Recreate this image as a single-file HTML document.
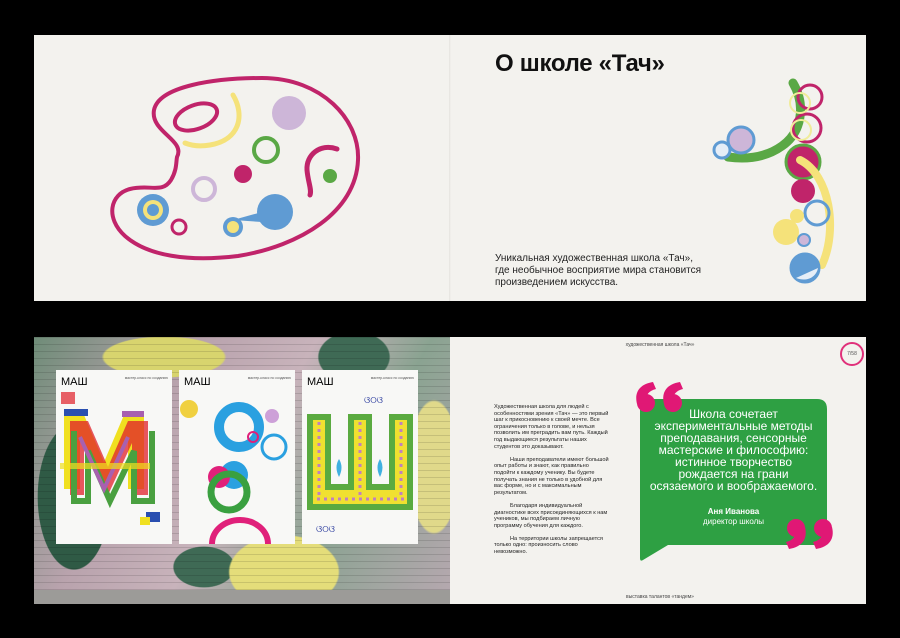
<!DOCTYPE html>
<html><head><meta charset="utf-8"><style>
html,body{margin:0;padding:0;background:#000;width:900px;height:638px;overflow:hidden}
*{box-sizing:border-box}
.f{font-family:"Liberation Sans",sans-serif}
.pg{position:absolute;background:#f3f2ee}
</style></head><body class="f">
<div class="pg" style="left:34px;top:35px;width:832px;height:266px"></div>
<div style="position:absolute;left:449px;top:35px;width:2px;height:266px;background:linear-gradient(90deg,#e4e3de,#f3f2ee)"></div>
<svg style="position:absolute;left:0;top:0" width="900" height="638">
<g fill="none" stroke-linecap="round">
<path d="M177,157 C186,140 150,132 154,110 C159,86 215,78 262,78 C322,78 360,120 358,160 C356,212 300,246 238,256 C188,262 148,256 125,236 C105,218 110,194 130,189 C150,184 162,194 171,180 C177,170 176,162 177,157Z" stroke="#c0246a" stroke-width="4"/>
<ellipse cx="196" cy="117" rx="22" ry="12" transform="rotate(-20 196 117)" stroke="#c0246a" stroke-width="4"/>
<path d="M233,95 C245,115 240,140 210,145 C198,147 190,145 185,143" stroke="#f5e27a" stroke-width="5"/>
<circle cx="266" cy="150" r="12" stroke="#5aa845" stroke-width="4"/>
<path d="M337,149 C320,143 306,155 307,170 C308,182 312,190 310,195" stroke="#c0246a" stroke-width="5"/>
<circle cx="204" cy="189" r="11" stroke="#cdb6d8" stroke-width="4"/>
<circle cx="179" cy="227" r="7" stroke="#c0246a" stroke-width="3"/>
</g>
<circle cx="289" cy="113" r="17" fill="#cdb6d8"/>
<circle cx="330" cy="176" r="7" fill="#5aa845"/>
<circle cx="243" cy="174" r="9" fill="#c0246a"/>
<circle cx="153" cy="210" r="16" fill="#5f9bd3"/><circle cx="153" cy="210" r="10" fill="#f5e27a"/><circle cx="153" cy="210" r="6" fill="#5f9bd3"/>
<path d="M233,220 L262,212 L262,222 Z" fill="#5f9bd3"/>
<circle cx="275" cy="212" r="18" fill="#5f9bd3"/>
<circle cx="233" cy="227" r="10" fill="#5f9bd3"/><circle cx="233" cy="227" r="6" fill="#f5e27a"/>
<g fill="none" stroke-linecap="round">
<path d="M793,83 C806,105 802,132 782,146 C768,156 750,160 728,157" stroke="#5aa845" stroke-width="9"/>
<circle cx="810" cy="97" r="12" stroke="#c0246a" stroke-width="3"/>
<circle cx="807" cy="128" r="14" stroke="#c0246a" stroke-width="3"/>
<circle cx="800" cy="103" r="10" stroke="#f0ec9a" stroke-width="2"/>
<circle cx="801" cy="130" r="10" stroke="#f0ec9a" stroke-width="2"/>
</g>
<circle cx="741" cy="140" r="13" fill="#cdb6d8" stroke="#5f9bd3" stroke-width="3"/>
<circle cx="722" cy="150" r="8" fill="#e6eef7" stroke="#5f9bd3" stroke-width="3"/>
<circle cx="803" cy="162" r="17" fill="#c0246a" stroke="#5aa845" stroke-width="3"/>
<circle cx="803" cy="191" r="12" fill="#c0246a"/>
<path d="M800,160 C830,175 838,230 822,265" fill="none" stroke="#f5e27a" stroke-width="8" stroke-linecap="round"/>
<circle cx="817" cy="213" r="12" fill="none" stroke="#5f9bd3" stroke-width="3"/>
<circle cx="797" cy="216" r="7" fill="#f5e27a"/>
<circle cx="786" cy="232" r="13" fill="#f5e27a"/>
<circle cx="804" cy="240" r="6" fill="#cdb6d8" stroke="#5f9bd3" stroke-width="2"/>
<circle cx="805" cy="268" r="14" fill="#5f9bd3" stroke="#5f9bd3" stroke-width="3"/>
<path d="M796,278 C806,282 816,278 818,268" fill="#e6eef7"/>
</svg>
<div style="position:absolute;left:495px;top:50px;font-size:24px;font-weight:bold;color:#111;letter-spacing:-0.3px">О школе «Тач»</div>
<div style="position:absolute;left:495px;top:253px;font-size:10px;line-height:12px;color:#222">Уникальная художественная школа «Тач»,<br>где необычное восприятие мира становится<br>произведением искусства.</div>

<div class="pg" style="left:450px;top:337px;width:416px;height:267px"></div>
<div style="position:absolute;left:34px;top:337px;width:416px;height:267px;overflow:hidden;background:
radial-gradient(ellipse 60px 120px at 40px 160px,#2f5a45 0,#2f5a45 60%,transparent 61%),
radial-gradient(ellipse 90px 60px at 250px 235px,#e4dd7a 0,#e4dd7a 60%,transparent 62%),
radial-gradient(ellipse 50px 130px at 400px 130px,#e0d98a 0,#e0d98a 50%,transparent 52%),
radial-gradient(ellipse 120px 40px at 130px 20px,#d8d46e 0,#d8d46e 50%,transparent 52%),
radial-gradient(ellipse 70px 50px at 320px 20px,#3f6a55 0,#3f6a55 50%,transparent 52%),
radial-gradient(ellipse 60px 40px at 170px 230px,#3f6a55 0,#3f6a55 50%,transparent 52%),
linear-gradient(120deg,#6f8c78 0%,#b9a3ad 30%,#c8b3bb 50%,#8aa391 70%,#b7a8b0 100%)">
<div style="position:absolute;left:0;top:0;width:100%;height:100%;background:repeating-linear-gradient(0deg,rgba(0,0,0,.12) 0 1px,transparent 1px 7px)"></div>
<div style="position:absolute;left:0;top:253px;width:100%;height:14px;background:#9c9b98"></div>
<svg style="position:absolute;left:0;top:0" width="416" height="267">
<g font-family="Liberation Sans,sans-serif">
<rect x="22" y="33" width="116" height="174" fill="#f8f8f6"/>
<rect x="145" y="33" width="116" height="174" fill="#f8f8f6"/>
<rect x="268" y="33" width="116" height="174" fill="#f8f8f6"/>
<text x="27" y="48" font-size="11">МАШ</text><text x="150" y="48" font-size="11">МАШ</text><text x="273" y="48" font-size="11">МАШ</text>
<text x="134" y="42" font-size="3.5" text-anchor="end" fill="#555">мастер-класс по созданию</text>
<text x="257" y="42" font-size="3.5" text-anchor="end" fill="#555">мастер-класс по созданию</text>
<text x="380" y="42" font-size="3.5" text-anchor="end" fill="#555">мастер-класс по созданию</text>
<!-- M -->
<path d="M30,78 L30,152 L46,152 L46,100 L70,152 L94,100 L94,152 L110,152 L110,78 L90,78 L70,125 L50,78Z" fill="#f0e020"/>
<path d="M36,84 L36,158 L50,158 L50,106 L74,158 L98,106 L98,158 L114,158 L114,84 L94,84 L74,130 L54,84Z" fill="#e0202a" opacity=".75"/>
<path d="M40,94 L40,164 L54,164 L54,114 L76,164 L100,114 L100,164 L118,164 L118,94" fill="none" stroke="#4aa040" stroke-width="6"/>
<path d="M46,100 L70,152 L94,100" fill="none" stroke="#a860b0" stroke-width="4"/>
<rect x="30" y="72" width="24" height="7" fill="#2a4fb0"/><rect x="88" y="74" width="22" height="6" fill="#a860b0"/>
<rect x="26" y="126" width="90" height="6" fill="#f0e020" opacity=".7"/>
<rect x="27" y="55" width="14" height="12" fill="#e0202a" opacity=".7"/><rect x="112" y="175" width="14" height="10" fill="#2a4fb0"/><rect x="106" y="180" width="10" height="8" fill="#f0e020"/>
<!-- 2nd -->
<circle cx="155" cy="72" r="9" fill="#f0d040"/><circle cx="205" cy="90" r="20" fill="none" stroke="#2aa0e0" stroke-width="10"/>
<circle cx="200" cy="138" r="14" fill="#2aa0e0"/><circle cx="185" cy="140" r="11" fill="#e0207a"/>
<circle cx="195" cy="155" r="18" fill="none" stroke="#3aa040" stroke-width="7"/><circle cx="219" cy="100" r="5" fill="none" stroke="#e0207a" stroke-width="2"/>
<circle cx="240" cy="110" r="12" fill="none" stroke="#2aa0e0" stroke-width="3"/><circle cx="238" cy="79" r="7" fill="#cda0d8"/>
<path d="M178,207 A28,24 0 0 1 234,207" fill="none" stroke="#e0207a" stroke-width="6"/>
<!-- Ш -->
<path d="M276,80 L276,170 L376,170 L376,80 L358,80 L358,150 L335,150 L335,80 L317,80 L317,150 L294,150 L294,80Z" fill="#f0e030" stroke="#5aaa40" stroke-width="6"/>
<path d="M285,85 V160 M326,85 V160 M367,85 V160 M283,162 H370" stroke="#c080c0" stroke-width="3" stroke-dasharray="3 4"/>
<path d="M305,140 q-5,-10 0,-18 q5,8 0,18 M346,140 q-5,-10 0,-18 q5,8 0,18" fill="#40b0e0"/>
<text x="330" y="66" font-size="9" fill="#3040a0">ଓ୦ଓ</text><text x="282" y="195" font-size="9" fill="#3040a0">ଓ୦ଓ</text>
</g></svg>
</div>
<div style="position:absolute;left:600px;top:342px;width:120px;text-align:center;font-size:5px;color:#444">художественная школа «Тач»</div>
<div style="position:absolute;left:840px;top:342px;width:24px;height:24px;border:2px solid #e0307a;border-radius:50%;font-size:5px;color:#555;text-align:center;line-height:20px">7/58</div>
<div style="position:absolute;left:494px;top:404px;width:115px;font-size:5.6px;line-height:6.6px;color:#222">Художественная школа для людей с особенностями зрения «Тач» — это первый шаг к прикосновению к своей мечте. Все ограничения только в голове, и нельзя позволить им преградить вам путь. Каждый год выдающиеся результаты наших студентов это доказывают.<br><br><span style="padding-left:16px"></span>Наши преподаватели имеют большой опыт работы и знают, как правильно подойти к каждому ученику. Вы будете получать знания не только в удобной для вас форме, но и с максимальным результатом.<br><br><span style="padding-left:16px"></span>Благодаря индивидуальной диагностике всех присоединяющихся к нам учеников, мы подбираем личную программу обучения для каждого.<br><br><span style="padding-left:16px"></span>На территории школы запрещается только одно: произносить слово невозможно.</div>
<svg style="position:absolute;left:0;top:0" width="900" height="638">
<path d="M650,399 H817 Q827,399 827,409 V536 Q827,545 817,545 H668 L643,560 Q640,562 640,558 V409 Q640,399 650,399Z" fill="#2ea043"/>
<g fill="#e01875">
<circle cx="646" cy="403" r="9"/><circle cx="673" cy="403" r="9"/>
<path d="M637,404 C634,392 640,384 653,382 L656,389 C648,391 645,396 646,403Z"/>
<path d="M664,404 C661,392 667,384 680,382 L683,389 C675,391 672,396 673,403Z"/>
<circle cx="796" cy="528" r="9"/><circle cx="823" cy="528" r="9"/>
<path d="M805,527 C808,539 802,547 789,549 L786,542 C794,540 797,535 796,528Z"/>
<path d="M832,527 C835,539 829,547 816,549 L813,542 C821,540 824,535 823,528Z"/>
</g>
</svg>
<div style="position:absolute;left:630px;top:408px;width:207px;text-align:center;color:#fff;font-size:12px;line-height:12px">Школа сочетает<br>экспериментальные методы<br>преподавания, сенсорные<br>мастерские и философию:<br>истинное творчество<br>рождается на грани<br>осязаемого и воображаемого.</div>
<div style="position:absolute;left:640px;top:507px;width:187px;text-align:center;color:#fff;font-size:8px;line-height:10px"><b>Аня Иванова</b><br>директор школы</div>
<div style="position:absolute;left:600px;top:594px;width:120px;text-align:center;font-size:5px;color:#444">выставка талантов «тандем»</div>
</body></html>
